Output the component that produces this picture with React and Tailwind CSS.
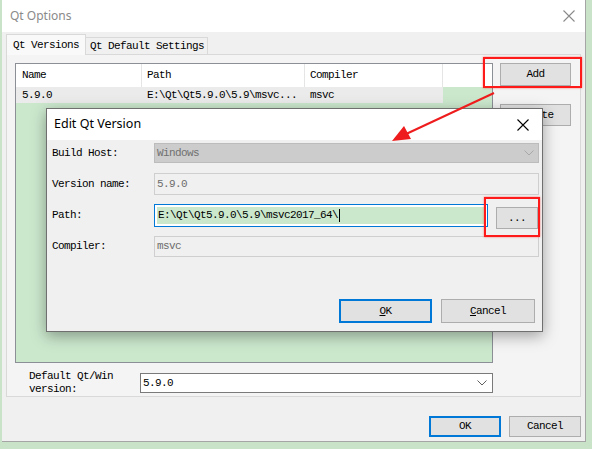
import React from "react";

function CloseX({ className }) {
  return (
    <svg width="12" height="12" viewBox="0 0 12 12" className={className}>
      <path d="M0.5 0.5L11.5 11.5M11.5 0.5L0.5 11.5" stroke="currentColor" strokeWidth="1.1" fill="none" />
    </svg>
  );
}

function Chevron({ className }) {
  return (
    <svg width="10" height="6" viewBox="0 0 10 6" className={className}>
      <path d="M0.5 0.5L5 5L9.5 0.5" stroke="currentColor" strokeWidth="1" fill="none" />
    </svg>
  );
}

const mono = "font-['Liberation_Mono',monospace] text-[11px] tracking-[-0.6px] leading-none";

export default function App() {
  return (
    <div className="relative w-[592px] h-[449px] overflow-hidden bg-[#c9e3c9]">
      {/* main window */}
      <div className="ml-[2px] w-[584px] h-[442px] bg-[#f0f0f0] border-r border-b border-[#a5a5a5] flex flex-col text-black">
        <div className="h-[32px] shrink-0 bg-white flex items-center justify-between pl-[8px] pr-[10px]">
          <span className="font-['Noto_Sans',sans-serif] text-[12px] text-[#8a8a8a]">Qt Options</span>
          <CloseX className="text-[#8a8a8a]" />
        </div>
        <div className="flex-1 flex flex-col px-[4px]">
          {/* tab bar */}
          <div className="h-[22px] flex items-end">
            <div className={`h-[21px] -mb-px relative z-10 w-[80px] pl-[6px] bg-[#f9f9f9] border border-b-0 border-[#d9d9d9] flex items-center ${mono}`}>
              Qt Versions
            </div>
            <div className={`h-[17px] w-[122px] pl-[4px] bg-[#f0f0f0] border border-l-0 border-b-0 border-[#d9d9d9] flex items-center ${mono}`}>
              Qt Default Settings
            </div>
          </div>
          {/* panel */}
          <div className="h-[343px] border border-[#d9d9d9] bg-[#f4f4f4] p-[8px] flex flex-col">
            <div className="flex gap-[7px]">
              {/* tree */}
              <div className="w-[478px] h-[300px] border border-[#8c9096] bg-[#cbe8cd] flex flex-col">
                <div className={`h-[23px] bg-white flex ${mono}`}>
                  <div className="w-[126px] pl-[6px] flex items-center border-r border-[#e5e5e5]">Name</div>
                  <div className="w-[163px] pl-[5px] flex items-center border-r border-[#e5e5e5]">Path</div>
                  <div className="w-[138px] pl-[5px] flex items-center border-r border-[#e5e5e5]">Compiler</div>
                  <div className="flex-1" />
                </div>
                <div className={`h-[16px] w-[427px] bg-[#ebebeb] flex ${mono}`}>
                  <div className="w-[126px] pl-[6px] flex items-center">5.9.0</div>
                  <div className="w-[163px] pl-[5px] flex items-center">E:\Qt\Qt5.9.0\5.9\msvc...</div>
                  <div className="w-[138px] pl-[5px] flex items-center">msvc</div>
                </div>
              </div>
              {/* side buttons */}
              <div className="flex flex-col gap-[18px]">
                <div className={`w-[71px] h-[23px] bg-[#e1e1e1] border border-[#adadad] flex items-center justify-center ${mono}`}>Add</div>
                <div className={`w-[71px] h-[22px] bg-[#e1e1e1] border border-[#adadad] flex items-center justify-center ${mono}`}>Delete</div>
              </div>
            </div>
            <div className="mt-[7px] flex items-center">
              <div className={`w-[125px] pl-[14px] leading-[13px] ${mono} !leading-[13px]`}>
                Default Qt/Win
                <br />
                version:
              </div>
              <div className={`w-[353px] h-[20px] bg-white border border-[#7a7a7a] flex items-center justify-between pl-[2px] pr-[5px] ${mono}`}>
                <span>5.9.0</span>
                <Chevron className="text-[#606060]" />
              </div>
            </div>
          </div>
          {/* bottom buttons */}
          <div className="mt-[19px] flex justify-end gap-[8px]">
            <div className={`w-[72px] h-[21px] bg-[#e1e1e1] border-2 border-[#0078d7] flex items-center justify-center ${mono}`}>OK</div>
            <div className={`w-[72px] h-[21px] bg-[#e1e1e1] border border-[#adadad] flex items-center justify-center ${mono}`}>Cancel</div>
          </div>
        </div>
      </div>

      {/* dialog */}
      <div className="absolute left-[46px] top-[108px] w-[497px] h-[224px] border border-[#6f6f6f] bg-[#f0f0f0] shadow-[0_4px_14px_rgba(0,0,0,0.35)] flex flex-col">
        <div className="h-[31px] shrink-0 bg-white flex items-center justify-between pl-[7px] pr-[13px]">
          <span className="font-['Noto_Sans',sans-serif] text-[12.5px] text-black">Edit Qt Version</span>
          <CloseX className="text-black" />
        </div>
        <div className="flex-1 flex flex-col pl-[5px] pr-[3px]">
          <div className="mt-[3px] flex items-center">
            <div className={`w-[102px] ${mono}`}>Build Host:</div>
            <div className={`w-[385px] h-[20px] bg-[#cccccc] border border-[#bcbcbc] flex items-center justify-between pl-[2px] pr-[4px] text-[#707070] ${mono}`}>
              <span>Windows</span>
              <Chevron className="text-[#a8a8a8]" />
            </div>
          </div>
          <div className="mt-[10px] flex items-center">
            <div className={`w-[102px] ${mono}`}>Version name:</div>
            <div className={`w-[385px] h-[22px] bg-[#f0f0f0] border border-[#cfcfcf] flex items-center pl-[2px] text-[#6d6d6d] ${mono}`}>5.9.0</div>
          </div>
          <div className="mt-[9px] flex items-start">
            <div className={`w-[102px] h-[23px] flex items-center ${mono}`}>Path:</div>
            <div className="w-[334px] h-[23px] border border-[#0078d7] bg-white p-[2px]">
              <div className={`h-full bg-[#cbe8cd] flex items-center pl-px ${mono}`}>
                <span>E:\Qt\Qt5.9.0\5.9\msvc2017_64\</span>
                <span className="inline-block w-px h-[13px] bg-black ml-px" />
              </div>
            </div>
            <div className={`ml-[8px] mt-[3px] w-[42px] h-[22px] bg-[#e1e1e1] border border-[#adadad] flex items-center justify-center ${mono}`}>...</div>
          </div>
          <div className="mt-[7px] flex items-center">
            <div className={`w-[102px] ${mono}`}>Compiler:</div>
            <div className={`w-[385px] h-[21px] bg-[#f0f0f0] border border-[#cfcfcf] flex items-center pl-[2px] text-[#6d6d6d] ${mono}`}>msvc</div>
          </div>
          <div className="mt-auto mb-[8px] mr-[4px] flex justify-end gap-[9px]">
            <div className={`w-[93px] h-[24px] bg-[#e1e1e1] border-2 border-[#0078d7] flex items-center justify-center ${mono}`}>
              <span><u>O</u>K</span>
            </div>
            <div className={`w-[94px] h-[24px] bg-[#e1e1e1] border border-[#adadad] flex items-center justify-center ${mono}`}>
              <span><u>C</u>ancel</span>
            </div>
          </div>
        </div>
      </div>

      {/* annotations */}
      <div className="absolute left-[483px] top-[57px] w-[99px] h-[31px] border-2 border-[#ff1a1a] shadow-[0_0_2px_rgba(255,0,0,0.5)]" />
      <div className="absolute left-[484px] top-[197px] w-[56px] h-[40px] border-2 border-[#ff1a1a] shadow-[0_0_2px_rgba(255,0,0,0.5)]" />
      <svg className="absolute left-0 top-0 pointer-events-none" width="592" height="449" viewBox="0 0 592 449">
        <line x1="494" y1="93" x2="405" y2="134.5" stroke="#ee1c1c" strokeWidth="2" />
        <polygon points="392,141 411,139 404,126" fill="#ee1c1c" />
      </svg>
    </div>
  );
}
